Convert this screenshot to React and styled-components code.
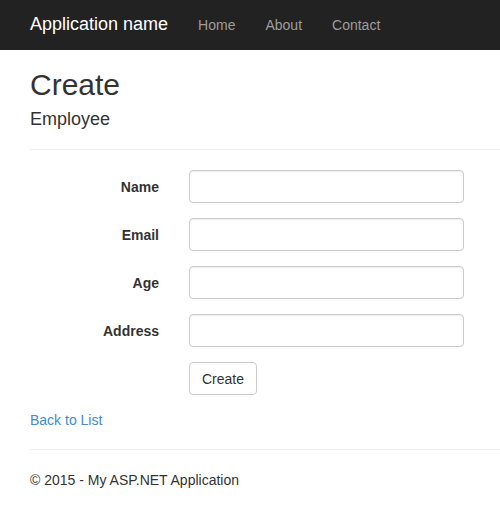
import styled, { createGlobalStyle } from "styled-components";

const GlobalStyle = createGlobalStyle`
  * {
    box-sizing: border-box;
  }
  body {
    margin: 0;
    background: #fff;
    color: #333;
    font-family: "Liberation Sans", Arial, Helvetica, sans-serif;
    font-size: 14px;
    line-height: 20px;
  }
`;

const Navbar = styled.nav`
  height: 50px;
  background: #222;
  display: flex;
  align-items: baseline;
  padding: 14px 0 0 30px;
`;

const Brand = styled.a`
  color: #fff;
  font-size: 18px;
  line-height: 20px;
  text-decoration: none;
  padding-right: 15px;
`;

const NavLink = styled.a`
  color: #9d9d9d;
  font-size: 14px;
  line-height: 20px;
  text-decoration: none;
  padding: 0 15px;
`;

const Body = styled.main`
  padding-left: 30px;
`;

const Title = styled.h2`
  font-size: 30px;
  font-weight: 500;
  line-height: 33px;
  margin: 18px 0 8px;
`;

const Subtitle = styled.h4`
  font-size: 18px;
  font-weight: 500;
  line-height: 20px;
  margin: 0 0 20px;
`;

const Rule = styled.hr`
  height: 0;
  border: 0;
  border-top: 1px solid #eee;
  margin: ${({ $top = 0 }) => $top}px 0 ${({ $bottom = 0 }) => $bottom}px;
`;

const FormGroup = styled.div`
  display: grid;
  grid-template-columns: 129px 275px;
  column-gap: 30px;
  margin-bottom: 15px;
`;

const Label = styled.label`
  text-align: right;
  font-weight: bold;
  padding-top: 7px;
`;

const Input = styled.input`
  height: 33px;
  padding: 6px 12px;
  font: inherit;
  color: #555;
  background: #fff;
  border: 1px solid #ccc;
  border-radius: 4px;
  box-shadow: inset 0 1px 1px rgba(0, 0, 0, 0.075);
`;

const Button = styled.button`
  justify-self: start;
  height: 33px;
  padding: 6px 12px;
  font: inherit;
  color: #333;
  background: #fff;
  border: 1px solid #ccc;
  border-radius: 4px;
`;

const BackLink = styled.a`
  display: block;
  color: #428bca;
  text-decoration: none;
`;

const Footer = styled.footer`
  p {
    margin: 0;
  }
`;

const fields = ["Name", "Email", "Age", "Address"];

export default function App() {
  return (
    <>
      <GlobalStyle />
      <Navbar>
        <Brand href="#">Application name</Brand>
        <NavLink href="#">Home</NavLink>
        <NavLink href="#">About</NavLink>
        <NavLink href="#">Contact</NavLink>
      </Navbar>
      <Body>
        <Title>Create</Title>
        <Subtitle>Employee</Subtitle>
        <Rule $bottom={20} />
        <form onSubmit={(e) => e.preventDefault()}>
          {fields.map((f) => (
            <FormGroup key={f}>
              <Label htmlFor={f}>{f}</Label>
              <Input id={f} type="text" />
            </FormGroup>
          ))}
          <FormGroup>
            <span />
            <Button type="submit">Create</Button>
          </FormGroup>
        </form>
        <BackLink href="#">Back to List</BackLink>
        <Rule $top={19} $bottom={20} />
        <Footer>
          <p>© 2015 - My ASP.NET Application</p>
        </Footer>
      </Body>
    </>
  );
}
